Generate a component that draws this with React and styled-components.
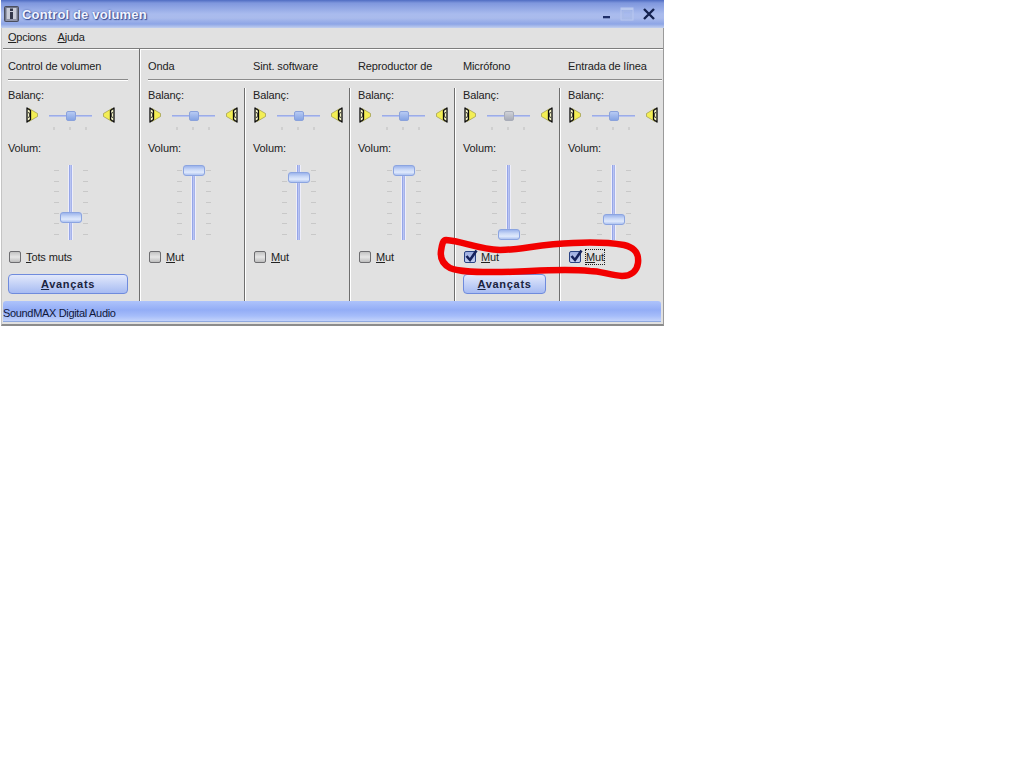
import React from "react";
import styled, { createGlobalStyle } from "styled-components";

const Global = createGlobalStyle`
  html, body { margin: 0; padding: 0; background: #fff; }
  body { font-family: "Liberation Sans", Arial, sans-serif; font-size: 11px; letter-spacing: -0.12px; color: #222; }
`;

const Page = styled.div`
  position: relative;
  width: 1024px;
  height: 768px;
  overflow: hidden;
  background: #fff;
`;

const Window = styled.div`
  margin-left: 1px;
  width: 663px;
  height: 326px;
  box-sizing: border-box;
  background: #e1e1e1;
  border-left: 1px solid #c4c4c4;
  border-right: 1px solid #9a9a9a;
  border-bottom: 2px solid #8c8c8c;
  display: flex;
  flex-direction: column;
`;

const TitleBar = styled.div`
  height: 28px;
  margin: 0 -1px;
  flex: none;
  display: flex;
  align-items: center;
  padding: 0 8px 0 3px;
  box-sizing: border-box;
  background: linear-gradient(180deg, #4f6cc2 0, #7f97dd 3px, #a9bbee 14px, #aabbec 18px, #8da5e6 24px, #c2cfee 28px);
`;

const TitleText = styled.span`
  margin-left: 3px;
  font-size: 13px;
  font-weight: 700;
  letter-spacing: 0.15px;
  color: #f2f5ff;
  text-shadow: 1px 1px 1px #33488f, 0 0 2px #3f5aa8;
  flex: 1;
`;

const Controls = styled.div`
  display: flex;
  align-items: center;
  gap: 8px;
`;

const MenuBar = styled.div`
  height: 19px;
  flex: none;
  display: flex;
  align-items: flex-start;
  gap: 11px;
  padding: 2px 0 0 6px;
  box-sizing: border-box;
  letter-spacing: -0.25px;
  line-height: 14px;
`;

const MenuItem = styled.span`
  u { text-underline-offset: 1px; }
`;

const Mixer = styled.div`
  flex: none;
  height: 252px;
  display: flex;
  border-top: 1px solid #7d7d7d;
  box-shadow: inset 0 1px 0 #fff;
  margin-top: 1px;
  margin-left: 1px;
`;

const Master = styled.div`
  width: 136px;
  flex: none;
  padding-left: 5px;
  box-sizing: border-box;
`;

const Channels = styled.div`
  flex: 1;
  border-left: 1px solid #6e6e6e;
  box-shadow: inset 1px 0 0 #fff;
  min-width: 0;
`;

const NameRow = styled.div`
  height: 31px;
  display: flex;
  margin: 0 ${(p) => (p.$master ? "11px" : "1px")} 8px ${(p) => (p.$master ? "0" : "8px")};
  border-bottom: 1px solid #8a8a8a;
  box-shadow: 0 1px 0 #fff;
  box-sizing: border-box;
  padding-top: 10px;
`;

const ChannelName = styled.span`
  width: 105px;
  flex: none;
  line-height: 14px;
  white-space: nowrap;
`;

const Strips = styled.div`
  display: grid;
  grid-template-columns: 104px repeat(3, 105px) 104px;
  height: 213px;
`;

const StripBox = styled.div`
  padding-left: ${(p) => (p.$master ? 0 : 8)}px;
  box-sizing: border-box;
  ${(p) =>
    p.$divided
      ? `
    border-left: 1px solid #6e6e6e;
    box-shadow: inset 1px 0 0 #fff;
  `
      : ""}
`;

const Label = styled.div`
  height: 14px;
  line-height: 14px;
`;

const BalanceRow = styled.div`
  width: 89px;
  height: 39px;
  margin-left: ${(p) => 1 + (p.$indent || 0)}px;
  padding-top: 5px;
  box-sizing: border-box;
  display: flex;
  align-items: flex-start;
  justify-content: space-between;
`;

const HSlider = styled.div`
  position: relative;
  width: 43px;
  height: 28px;
  margin-top: 1px;
`;

const HTrack = styled.div`
  position: absolute;
  left: 0;
  right: 0;
  top: 7px;
  height: 2px;
  background: linear-gradient(180deg, #8ea0e4, #c6cff2);
`;

const HThumb = styled.div`
  position: absolute;
  left: 17px;
  top: 3px;
  width: 10px;
  height: 10px;
  border-radius: 2px;
  box-sizing: border-box;
  border: 1px solid ${(p) => (p.$grey ? "#a8acb8" : "#8aa2dc")};
  background: ${(p) => (p.$grey ? "linear-gradient(180deg,#d0d2d8,#a8acb8)" : "linear-gradient(180deg,#b7caf3,#86a4e4)")};
`;

const HTicks = styled.div`
  position: absolute;
  left: 4px;
  right: 5px;
  top: 19px;
  display: flex;
  justify-content: space-between;
`;

const HTick = styled.i`
  width: 2px;
  height: 3px;
  background: #cfcfcf;
`;

const VolumeBox = styled.div`
  width: 89px;
  height: 90px;
  margin-left: ${(p) => 1 + (p.$indent || 0)}px;
  padding-top: 10px;
  box-sizing: border-box;
`;

const VSlider = styled.div`
  position: relative;
  width: 34px;
  height: 75px;
  margin: 0 auto;
  display: flex;
  justify-content: space-between;
`;

const VTrack = styled.div`
  position: absolute;
  left: 15px;
  top: 0;
  bottom: 0;
  width: 3px;
  background: linear-gradient(90deg, #8497e4, #c4cdf4 60%, #8f9fe4);
  box-shadow: -1px 0 0 #eeeefa, 1px 0 0 #eeeefa;
`;

const VThumb = styled.div`
  position: absolute;
  left: 6px;
  top: ${(p) => p.$top}px;
  width: 22px;
  height: 11px;
  border-radius: 3px;
  box-sizing: border-box;
  border: 1px solid #8ba4e0;
  background: linear-gradient(180deg, #9cb4ec 0, #c9d8f7 40%, #dfe9fc 70%, #aec3f1 100%);
  box-shadow: 0 0 1px #cfd9f5;
`;

const VTicks = styled.div`
  width: 5px;
  padding: 5px 0 5px;
  box-sizing: border-box;
  display: flex;
  flex-direction: column;
  justify-content: space-between;
`;

const VTick = styled.i`
  height: 1px;
  background: #c8c8c8;
`;

const MuteRow = styled.label`
  height: 14px;
  margin-top: 5px;
  margin-left: 1px;
  display: flex;
  align-items: center;
  gap: 5px;
  line-height: 14px;
`;

const Check = styled.span`
  width: 12px;
  height: 12px;
  flex: none;
  box-sizing: border-box;
  border-radius: 2px;
  display: flex;
  align-items: center;
  justify-content: center;
  border: 1px solid ${(p) => (p.$on ? "#2a4384" : "#6d6d70")};
  background: ${(p) => (p.$on ? "linear-gradient(180deg,#9dadE0,#c3cef0)" : "linear-gradient(180deg,#c2c2c2,#e6e6e6 50%,#bdbdbd)")};
`;

const MuteText = styled.span`
  outline: ${(p) => (p.$focus ? "1px dotted #222" : "none")};
`;

const AdvancedButton = styled.div`
  width: ${(p) => p.$w}px;
  height: 20px;
  margin-top: 10px;
  box-sizing: border-box;
  border: 1px solid #6f8bdd;
  border-radius: 4px;
  display: flex;
  align-items: center;
  justify-content: center;
  font-weight: 700;
  letter-spacing: 0.7px;
  color: #1a2340;
  background: linear-gradient(180deg, #e3e9fb 0, #c7d4f7 45%, #a7bbf2 100%);
`;

const StatusBar = styled.div`
  flex: none;
  height: 20px;
  margin: 0 2px 0 1px;
  line-height: 25px;
  letter-spacing: -0.33px;
  border-radius: 3px 3px 0 0;
  color: #10183a;
  background: linear-gradient(180deg, #aec3fb 0, #93adf6 45%, #a6bdfa 75%, #c3d3fb 100%);
  border-bottom: 1px solid #8ea8e0;
`;

const Scribble = styled.svg`
  position: absolute;
  left: 0;
  top: 0;
  pointer-events: none;
  filter: blur(0.4px);
`;

const InfoIcon = () => (
  <svg width="15" height="16" viewBox="0 0 15 16">
    <rect x="0.5" y="0.5" width="14" height="15" rx="1" fill="#6f7488" stroke="#4a4d5c" />
    <rect x="2.5" y="2" width="10" height="11" fill="#c9ccd8" />
    <rect x="6" y="2.5" width="3" height="2.5" fill="#33374a" />
    <rect x="6" y="6" width="3" height="7" fill="#33374a" />
    <rect x="2" y="13" width="11" height="2" fill="#8f93a6" />
  </svg>
);

const MinIcon = () => (
  <svg width="12" height="14" viewBox="0 0 12 14">
    <rect x="3" y="9" width="7" height="2" fill="#1f2f6a" />
    <rect x="3" y="11" width="7" height="1" fill="#7d8fc4" />
  </svg>
);

const MaxIcon = () => (
  <svg width="14" height="14" viewBox="0 0 14 14" fill="none">
    <rect x="1" y="1" width="12" height="12" stroke="#b9c8ee" strokeWidth="1" />
    <rect x="1" y="1" width="12" height="2" fill="#b9c8ee" />
    <rect x="3" y="4" width="8" height="7" stroke="#a9bbe6" />
  </svg>
);

const CloseIcon = () => (
  <svg width="14" height="14" viewBox="0 0 14 14">
    <path d="M2 2 L12 12 M12 2 L2 12" stroke="#14224f" strokeWidth="2.4" />
  </svg>
);

const Speaker = ({ flip }) => (
  <svg width="12" height="16" viewBox="0 0 12 16" style={flip ? { transform: "scaleX(-1)" } : undefined}>
    <path d="M3 1.5 L11.5 6.5 L11.5 9.5 L3 14.5 Z" fill="#f3ee55" stroke="#8d8a3a" strokeWidth="0.6" />
    <path d="M1 1 L4.5 3.5 L4.5 12.5 L1 15 Z" fill="#f7f5c8" stroke="#0c0c0c" strokeWidth="1.3" strokeLinejoin="round" />
    <path d="M2.5 5 L4 8 L2.5 11" fill="none" stroke="#0c0c0c" strokeWidth="0.9" />
  </svg>
);

const CheckMark = () => (
  <svg width="14" height="14" viewBox="0 0 14 14" style={{ margin: "-3px -2px 0 0", flex: "none" }}>
    <path d="M2.5 7 L6 11 L12.5 1.5" fill="none" stroke="#16225c" strokeWidth="2.6" />
  </svg>
);

const TICKS = [0, 1, 2, 3, 4, 5, 6];

const Strip = ({ thumb, indent, grey, muted, focus, muteLabel = "Mut", button, buttonW, master, divided }) => (
  <StripBox $master={master} $divided={divided}>
    <Label>Balanç:</Label>
    <BalanceRow $indent={indent}>
      <Speaker />
      <HSlider>
        <HTrack />
        <HThumb $grey={grey} />
        <HTicks>
          <HTick />
          <HTick />
          <HTick />
        </HTicks>
      </HSlider>
      <Speaker flip />
    </BalanceRow>
    <Label>Volum:</Label>
    <VolumeBox $indent={indent}>
      <VSlider>
        <VTicks>{TICKS.map((t) => <VTick key={t} />)}</VTicks>
        <VTrack />
        <VThumb $top={thumb} />
        <VTicks>{TICKS.map((t) => <VTick key={t} />)}</VTicks>
      </VSlider>
    </VolumeBox>
    <MuteRow>
      <Check $on={muted}>{muted && <CheckMark />}</Check>
      <MuteText $focus={focus}>
        <u>{muteLabel[0]}</u>
        {muteLabel.slice(1)}
      </MuteText>
    </MuteRow>
    {button && (
      <AdvancedButton $w={buttonW}>
        <span>
          <u>A</u>vançats
        </span>
      </AdvancedButton>
    )}
  </StripBox>
);

const channels = [
  { name: "Onda", thumb: 0 },
  { name: "Sint. software", thumb: 7, divided: true },
  { name: "Reproductor de", thumb: 0, divided: true },
  { name: "Micrófono", thumb: 64, muted: true, grey: true, button: true, buttonW: 83, divided: true },
  { name: "Entrada de línea", thumb: 49, muted: true, focus: true, divided: true },
];

export default function App() {
  return (
    <Page>
      <Global />
      <Window>
        <TitleBar>
          <InfoIcon />
          <TitleText>Control de volumen</TitleText>
          <Controls>
            <MinIcon />
            <MaxIcon />
            <CloseIcon />
          </Controls>
        </TitleBar>
        <MenuBar>
          <MenuItem><u>O</u>pcions</MenuItem>
          <MenuItem><u>A</u>juda</MenuItem>
        </MenuBar>
        <Mixer>
          <Master>
            <NameRow $master>
              <ChannelName>Control de volumen</ChannelName>
            </NameRow>
            <Strip master thumb={47} indent={17} muteLabel="Tots muts" button buttonW={120} />
          </Master>
          <Channels>
            <NameRow>
              {channels.map((c) => (
                <ChannelName key={c.name}>{c.name}</ChannelName>
              ))}
            </NameRow>
            <Strips>
              {channels.map(({ name, ...c }) => (
                <Strip key={name} {...c} />
              ))}
            </Strips>
          </Channels>
        </Mixer>
        <StatusBar>SoundMAX Digital Audio</StatusBar>
      </Window>
      <Scribble width="1024" height="768" viewBox="0 0 1024 768">
        <path
          d="M446 240 C 462 241 478 249 500 250 C 520 250 540 244 573 243 C 595 242 612 243 624 245 C 636 248 639 254 638 263 C 637 271 631 276 622 276 C 610 275 600 271 590 271 C 570 269 550 270 530 271 C 515 272 505 272 490 272 C 475 272 460 272 450 268 C 443 264 440 258 441 251 C 442 244 443 240 446 240 Z"
          fill="none"
          stroke="#f20000"
          strokeWidth="6.5"
          strokeLinejoin="round"
        />
      </Scribble>
    </Page>
  );
}
